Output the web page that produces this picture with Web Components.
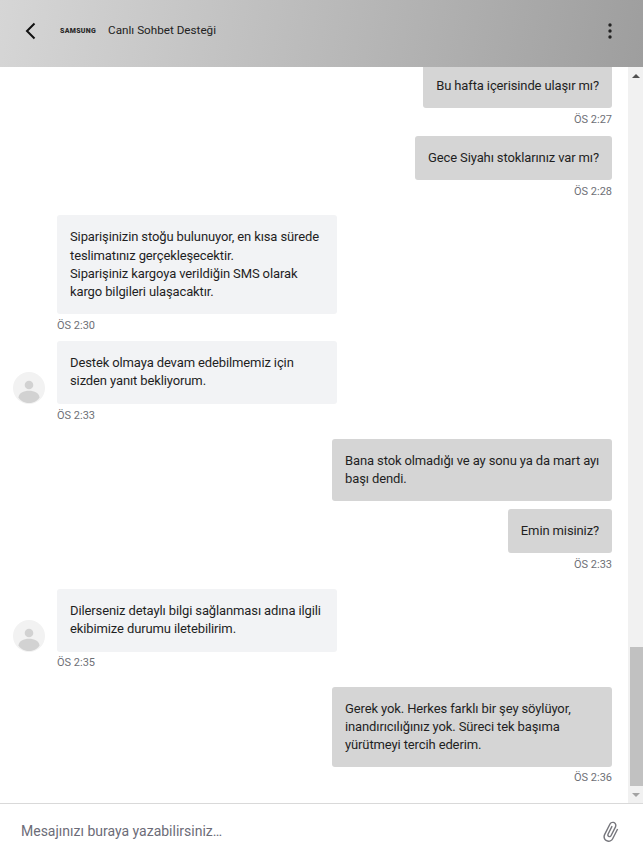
<!DOCTYPE html>
<html lang="tr">
<head>
<meta charset="utf-8">
<title>Canlı Sohbet Desteği</title>
<style>
    html, body {
        margin: 0;
        height: 100%;
        background: #fff;
        font-family: Roboto, "Liberation Sans", sans-serif;
    }
</style>
</head>
<body>
<chat-app>
    <chat-header slot="header" title-text="Canlı Sohbet Desteği"></chat-header>

    <chat-message class="first" side="right" time="ÖS 2:27">Bu hafta içerisinde ulaşır mı?</chat-message>
    <chat-message side="right" time="ÖS 2:28">Gece Siyahı stoklarınız var mı?</chat-message>
    <chat-message class="switch" side="left" time="ÖS 2:30">Siparişinizin stoğu bulunuyor, en kısa sürede teslimatınız gerçekleşecektir.<br>Siparişiniz kargoya verildiğin SMS olarak kargo bilgileri ulaşacaktır.</chat-message>
    <chat-message side="left" time="ÖS 2:33" avatar>Destek olmaya devam edebilmemiz için sizden yanıt bekliyorum.</chat-message>
    <chat-message class="switch" side="right"><span style="white-space: nowrap">Bana stok olmadığı ve ay sonu ya da mart ayı</span> başı dendi.</chat-message>
    <chat-message side="right" time="ÖS 2:33">Emin misiniz?</chat-message>
    <chat-message class="switch late" side="left" time="ÖS 2:35" avatar>Dilerseniz detaylı bilgi sağlanması adına ilgili ekibimize durumu iletebilirim.</chat-message>
    <chat-message class="switch late" side="right" time="ÖS 2:36">Gerek yok. Herkes farklı bir şey söylüyor, inandırıcılığınız yok. Süreci tek başıma yürütmeyi tercih ederim.</chat-message>

    <chat-scrollbar slot="scrollbar"></chat-scrollbar>
    <chat-input slot="footer" placeholder="Mesajınızı buraya yazabilirsiniz..."></chat-input>
</chat-app>

<script>
class ChatApp extends HTMLElement {
    constructor() {
        super();
        this.attachShadow({ mode: 'open' });
    }

    connectedCallback() {
        this.shadowRoot.innerHTML = `
            <style>
                :host {
                    display: flex;
                    flex-direction: column;
                    height: 857px;
                    overflow: hidden;
                }
                .middle {
                    display: flex;
                    height: 736px;
                    flex: none;
                }
                .messages {
                    flex: 1;
                    min-width: 0;
                    overflow: hidden;
                }
                .list {
                    margin-top: -3px;
                    padding: 0 16px 0 13px;
                }
            </style>
            <slot name="header"></slot>
            <div class="middle">
                <div class="messages"><div class="list"><slot></slot></div></div>
                <slot name="scrollbar"></slot>
            </div>
            <slot name="footer"></slot>
        `;
    }
}

class ChatHeader extends HTMLElement {
    constructor() {
        super();
        this.attachShadow({ mode: 'open' });
    }

    connectedCallback() {
        this.shadowRoot.innerHTML = `
            <style>
                :host {
                    display: flex;
                    align-items: center;
                    flex: none;
                    height: 67px;
                    padding: 0 31px 8px 25px;
                    box-sizing: border-box;
                    background: linear-gradient(100deg, #d6d6d6 0%, #9e9e9e 100%);
                    color: #222;
                }
                .back { width: 11px; height: 18px; display: block; margin-top: 2px; }
                .logo {
                    margin-left: 24px;
                    font: 900 7px Roboto, "Liberation Sans", sans-serif;
                    letter-spacing: 0.3px;
                    color: #2a2a2a;
                    margin-top: 2px;
                }
                .title {
                    margin-left: 12px;
                    font-size: 11.7px;
                }
                .more { margin-left: auto; width: 4px; height: 16px; display: block; margin-top: 2px; }
            </style>
            <svg class="back" viewBox="0 0 11 18"><path d="M9.500 1.500 2 9l7.500 7.500" fill="none" stroke="#111" stroke-width="2"/></svg>
            <span class="logo">SAMSUNG</span>
            <span class="title">${this.getAttribute('title-text')}</span>
            <svg class="more" viewBox="0 0 4 16"><circle cx="2" cy="2" r="1.700" fill="#222"/><circle cx="2" cy="8" r="1.700" fill="#222"/><circle cx="2" cy="14" r="1.700" fill="#222"/></svg>
        `;
    }
}

class ChatMessage extends HTMLElement {
    constructor() {
        super();
        this.attachShadow({ mode: 'open' });
    }

    connectedCallback() {
        const time = this.getAttribute('time');
        const avatar = this.hasAttribute('avatar');
        this.shadowRoot.innerHTML = `
            <style>
                :host {
                    display: flex;
                    flex-direction: column;
                    margin-top: 8px;
                }
                :host(.switch) { margin-top: 16px; }
                :host(.late) { margin-top: 17px; }
                :host(.first) { margin-top: 0; padding-bottom: 1px; }
                .row {
                    display: flex;
                    align-items: flex-end;
                    gap: 12px;
                    padding-left: 44px;
                    position: relative;
                }
                :host([side="right"]) .row { justify-content: flex-end; padding-left: 0; }
                .avatar {
                    position: absolute;
                    left: 0;
                    bottom: 0;
                    width: 32px;
                    height: 32px;
                    display: block;
                }
                .bubble {
                    box-sizing: border-box;
                    max-width: 280px;
                    width: 280px;
                    padding: 13px;
                    border-radius: 3px;
                    font-size: 13px;
                    letter-spacing: -0.12px;
                    line-height: 18.2px;
                    color: #1f1f1f;
                    background: #f2f3f5;
                }
                :host([side="right"]) .bubble {
                    width: fit-content;
                    background: #d5d5d5;
                }
                .time {
                    height: 14px;
                    margin-top: 5px;
                    padding-left: 44px;
                    font-size: 11px;
                    line-height: 14px;
                    color: #6e7076;
                }
                :host(.late) .time { margin-top: 4px; }
                :host([side="right"]) .time { text-align: right; padding-left: 0; }
            </style>
            <div class="row">
                ${avatar ? `<svg class="avatar" viewBox="0 0 32 32">
                    <circle cx="16" cy="16" r="16" fill="#f2f2f2"/>
                    <circle cx="16" cy="13" r="4.300" fill="#d2d2d2"/>
                    <path d="M5.500 25.500C6 21 10.500 18.800 16 18.800S26 21 26.500 25.500C24 29.500 20 31 16 31S8 29.500 5.500 25.500Z" fill="#d2d2d2"/>
                </svg>` : ''}
                <div class="bubble"><slot></slot></div>
            </div>
            ${time ? `<div class="time">${time}</div>` : ''}
        `;
    }
}

class ChatScrollbar extends HTMLElement {
    constructor() {
        super();
        this.attachShadow({ mode: 'open' });
    }

    connectedCallback() {
        this.shadowRoot.innerHTML = `
            <style>
                :host {
                    display: flex;
                    flex-direction: column;
                    flex: none;
                    width: 15px;
                    background: #f1f1f1;
                }
                .arrow {
                    flex: none;
                    height: 17px;
                    display: flex;
                    align-items: center;
                    justify-content: center;
                }
                .arrow svg { width: 8px; height: 4px; display: block; }
                .track { flex: 1; display: flex; flex-direction: column; justify-content: flex-end; padding-left: 2px; }
                .thumb { height: 139px; background: #c1c1c1; }
            </style>
            <div class="arrow"><svg viewBox="0 0 8 4"><path d="M0 4 4 0l4 4Z" fill="#505050"/></svg></div>
            <div class="track"><div class="thumb"></div></div>
            <div class="arrow"><svg viewBox="0 0 8 4"><path d="M0 0h8L4 4Z" fill="#a3a3a3"/></svg></div>
        `;
    }
}

class ChatInput extends HTMLElement {
    constructor() {
        super();
        this.attachShadow({ mode: 'open' });
    }

    connectedCallback() {
        this.shadowRoot.innerHTML = `
            <style>
                :host {
                    display: flex;
                    align-items: center;
                    justify-content: space-between;
                    flex: none;
                    height: 54px;
                    box-sizing: border-box;
                    border-top: 1px solid #d9d9d9;
                    padding: 0 20px 0 21px;
                    background: #fff;
                }
                .text { font-size: 14px; color: #6c6c78; }
                svg { width: 24px; height: 24px; display: block; margin-top: 3px; }
            </style>
            <span class="text">${this.getAttribute('placeholder').replace('...', '…')}</span>
            <svg viewBox="0 0 24 24"><path transform="rotate(27 12 12) translate(12 12) scale(.95) translate(-12.500 -12)" d="M16.500 6v11.500c0 2.210-1.790 4-4 4s-4-1.790-4-4V5c0-1.380 1.120-2.500 2.500-2.500s2.500 1.120 2.500 2.500v10.500c0 .55-.45 1-1 1s-1-.45-1-1V6H10v9.500c0 1.380 1.120 2.500 2.500 2.500s2.500-1.120 2.500-2.500V5c0-2.210-1.790-4-4-4S7 2.790 7 5v12.500c0 3.040 2.460 5.500 5.500 5.500s5.500-2.460 5.500-5.500V6h-1.500z" fill="#77777d"/></svg>
        `;
    }
}

customElements.define('chat-app', ChatApp);
customElements.define('chat-header', ChatHeader);
customElements.define('chat-message', ChatMessage);
customElements.define('chat-scrollbar', ChatScrollbar);
customElements.define('chat-input', ChatInput);
</script>
</body>
</html>
